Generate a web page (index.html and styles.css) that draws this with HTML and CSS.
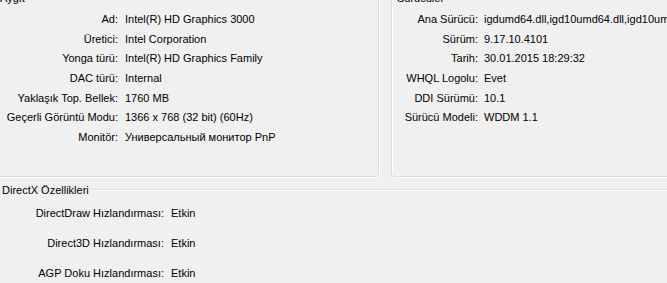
FILE: index.html
```html
<!DOCTYPE html>
<html lang="tr">
<head>
  <meta charset="UTF-8" />
  <meta name="viewport" content="width=device-width, initial-scale=1.0"/>
  <title>Ekran</title>
  <link rel="stylesheet" href="styles.css">
</head>
<body>

  <div class="ust">
    <fieldset class="grup sol">
      <legend>Aygıt</legend>
      <div class="bilgi">
        <span class="etiket">Ad:</span><span>Intel(R) HD Graphics 3000</span>
        <span class="etiket">Üretici:</span><span>Intel Corporation</span>
        <span class="etiket">Yonga türü:</span><span>Intel(R) HD Graphics Family</span>
        <span class="etiket">DAC türü:</span><span>Internal</span>
        <span class="etiket">Yaklaşık Top. Bellek:</span><span>1760 MB</span>
        <span class="etiket">Geçerli Görüntü Modu:</span><span>1366 x 768 (32 bit) (60Hz)</span>
        <span class="etiket">Monitör:</span><span>Универсальный монитор PnP</span>
      </div>
    </fieldset>

    <fieldset class="grup sag">
      <legend>Sürücüler</legend>
      <div class="bilgi">
        <span class="etiket">Ana Sürücü:</span><span>igdumd64.dll,igd10umd64.dll,igd10umd64.dll</span>
        <span class="etiket">Sürüm:</span><span>9.17.10.4101</span>
        <span class="etiket">Tarih:</span><span>30.01.2015 18:29:32</span>
        <span class="etiket">WHQL Logolu:</span><span>Evet</span>
        <span class="etiket">DDI Sürümü:</span><span>10.1</span>
        <span class="etiket">Sürücü Modeli:</span><span>WDDM 1.1</span>
      </div>
    </fieldset>
  </div>

  <div class="baslik">
    <span>DirectX Özellikleri</span>
    <div class="cizgi"></div>
  </div>

  <div class="directx">
    <span class="etiket">DirectDraw Hızlandırması:</span><span>Etkin</span>
    <span class="etiket">Direct3D Hızlandırması:</span><span>Etkin</span>
    <span class="etiket">AGP Doku Hızlandırması:</span><span>Etkin</span>
  </div>

</body>
</html>
```

FILE: styles.css
```css
html, body {
  overflow: hidden;
}

body {
  font-family: "Liberation Sans", Arial, sans-serif;
  font-size: 11px;
  color: #000;
  margin: 0;
  background-color: #f0f0f0;
}

.ust {
  display: flex;
  margin: -8px 0 0 -6px;
  width: 720px;
}

.grup {
  margin: 0;
  padding: 4px 0 29px 0;
  min-inline-size: 0;
  border: 1px solid #d5dfe5;
  border-radius: 3px;
  box-shadow: 1px 1px 0 #fff, inset 1px 1px 0 #fff;
}

.grup legend {
  padding: 0 2px;
  margin-left: 3px;
  line-height: 13px;
}

.sol {
  width: 383px;
}

.sag {
  margin-left: 12px;
  flex: 1;
}

.bilgi {
  display: grid;
  grid-auto-rows: 19.7px;
  align-items: center;
  column-gap: 7px;
  white-space: nowrap;
}

.sol .bilgi {
  grid-template-columns: 123px auto;
}

.sag .bilgi {
  grid-template-columns: 86px auto;
  column-gap: 6px;
}

.etiket {
  text-align: right;
}

.baslik {
  display: flex;
  align-items: center;
  gap: 3px;
  margin: 7px 0 0 2px;
  line-height: 13px;
}

.cizgi {
  flex: 1;
  border-top: 1px solid #d5dfe5;
  border-bottom: 1px solid #fff;
}

.directx {
  display: grid;
  grid-template-columns: 164px auto;
  grid-auto-rows: 30px;
  align-items: center;
  column-gap: 7px;
  margin-top: 1px;
}
```
